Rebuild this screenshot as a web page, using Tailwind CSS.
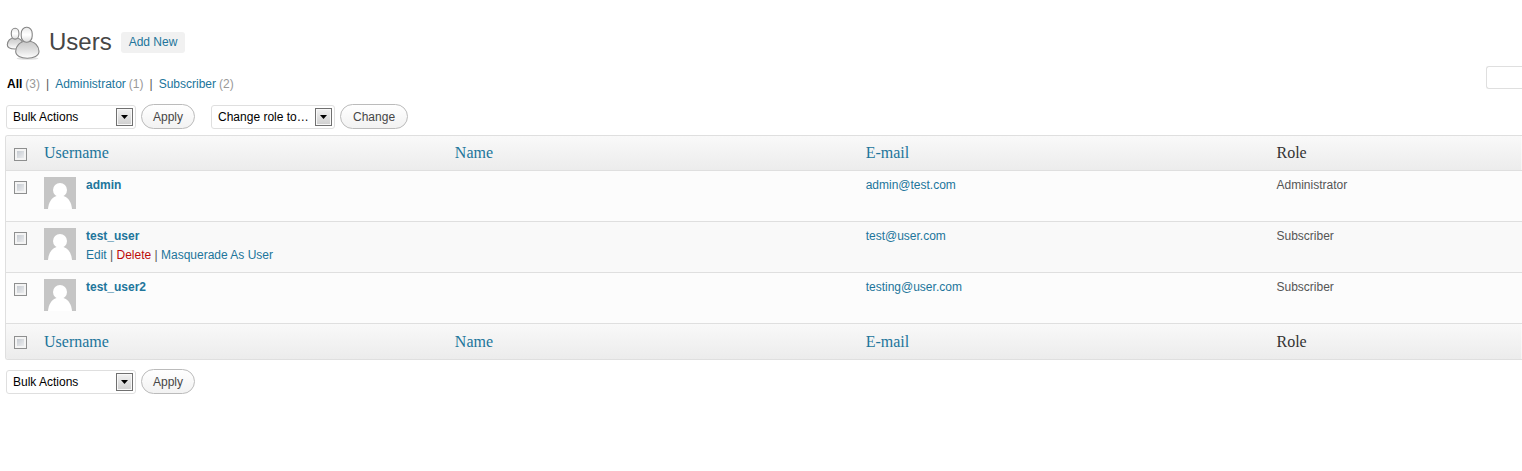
<!DOCTYPE html>
<html lang="en">
<head>
  <meta charset="utf-8">
  <meta name="viewport" content="width=device-width, initial-scale=1">
  <title>Users</title>
  <script src="https://cdn.jsdelivr.net/npm/@tailwindcss/browser@4"></script>
</head>
<body class="bg-white font-['Liberation_Sans',Arial,sans-serif] text-[12px] leading-[18px] text-[#555]">

<svg class="hidden">
  <symbol id="avatar" viewBox="0 0 32 32">
    <rect width="32" height="32" fill="#c5c5c5"/>
    <circle cx="16" cy="13" r="7" fill="#fff"/>
    <path d="M4 32C4.500 25.500 7.500 20.500 12.500 19H19.500C24.500 20.500 27.500 25.500 28 32Z" fill="#fff"/>
  </symbol>
</svg>

<main class="pl-[5px] pt-[25px]">
  <header class="flex items-center h-[34px]">
    <svg class="w-[36px] h-[36px] shrink-0" viewBox="0 0 36 36" fill="none">
      <defs>
        <linearGradient id="head" x1="0" y1="0" x2="0" y2="1">
          <stop offset="0" stop-color="#e8e8e8"/><stop offset=".5" stop-color="#fff"/><stop offset="1" stop-color="#dcdcdc"/>
        </linearGradient>
        <linearGradient id="torso" x1="0" y1="0" x2="0" y2="1">
          <stop offset="0" stop-color="#c6c6c6"/><stop offset=".5" stop-color="#dedede"/><stop offset="1" stop-color="#fff"/>
        </linearGradient>
      </defs>
      <ellipse cx="22.500" cy="34.500" rx="11" ry="1.300" fill="#e0e0e0"/>
      <g stroke="#858585" stroke-width="1.100">
        <path d="M10 13.500C5 13.500 2.300 17.500 2.300 20.800C2.300 23.800 6 25 10 25S18 23.800 18 20.800C18 17.500 15 13.500 10 13.500Z" fill="url(#torso)"/>
        <rect x="6.300" y="4.300" width="7.600" height="10.800" rx="3.700" ry="4.800" fill="url(#head)"/>
        <path d="M22.300 17C14.500 17 10.700 22.500 10.700 27.300C10.700 32 16 34.300 22.300 34.300S34 32 34 27.300C34 22.500 30 17 22.300 17Z" fill="url(#torso)"/>
        <rect x="16.200" y="3.300" width="11" height="15" rx="5.200" ry="6.300" fill="url(#head)"/>
      </g>
    </svg>
    <h1 class="ml-[8px] text-[24px] leading-[30px] text-[#464646]">Users</h1>
    <a href="#" class="ml-[9px] px-2 py-[2px] leading-[17px] rounded-[3px] bg-[#f1f1f1] text-[#21759b]">Add New</a>
  </header>

  <div class="flex items-start justify-between mt-[7px] h-[38px]">
    <ul class="flex pl-[2px] mt-[9px] gap-[6px]">
      <li class="flex gap-[3px]"><a href="#" class="font-bold text-black">All</a><span class="text-[#999]">(3)</span></li>
      <li>|</li>
      <li class="flex gap-[3px]"><a href="#" class="text-[#21759b]">Administrator</a><span class="text-[#999]">(1)</span></li>
      <li>|</li>
      <li class="flex gap-[3px]"><a href="#" class="text-[#21759b]">Subscriber</a><span class="text-[#999]">(2)</span></li>
    </ul>
    <input type="search" aria-label="Search Users" class="w-9 h-[23px] px-2 appearance-none border border-r-0 border-[#dfdfdf] rounded-l-[3px] bg-white">
  </div>

  <form class="flex items-center pl-px h-[25px]">
    <div class="relative">
      <select aria-label="Bulk Actions" class="block appearance-none w-[130px] h-6 pl-[6px] border border-[#dfdfdf] rounded-[3px] bg-white text-black">
        <option>Bulk Actions</option>
        <option>Delete</option>
      </select>
      <span class="absolute right-[3px] top-[3px] flex items-center justify-center w-[17px] h-[18px] border border-[#707070] bg-linear-to-b from-[#f2f2f2] to-[#cfcfcf] shadow-[inset_0_0_0_1px_#f8f8f8] pointer-events-none">
        <svg class="w-[7px] h-[4px]" viewBox="0 0 7 4"><path d="M0 0H7L3.500 4Z" fill="#000"/></svg>
      </span>
    </div>
    <button type="button" class="ml-[5px] px-[11px] h-[25px] border border-[#bbb] rounded-full bg-linear-to-b from-white to-[#f2f2f2] text-[#464646]">Apply</button>
    <div class="relative ml-4">
      <select aria-label="Change role to" class="block appearance-none w-[124px] h-6 pl-[6px] border border-[#dfdfdf] rounded-[3px] bg-white text-black">
        <option>Change role to…</option>
        <option>Subscriber</option>
        <option>Administrator</option>
      </select>
      <span class="absolute right-[3px] top-[3px] flex items-center justify-center w-[17px] h-[18px] border border-[#707070] bg-linear-to-b from-[#f2f2f2] to-[#cfcfcf] shadow-[inset_0_0_0_1px_#f8f8f8] pointer-events-none">
        <svg class="w-[7px] h-[4px]" viewBox="0 0 7 4"><path d="M0 0H7L3.500 4Z" fill="#000"/></svg>
      </span>
    </div>
    <button type="button" class="ml-[5px] px-3 h-[25px] border border-[#bbb] rounded-full bg-linear-to-b from-white to-[#f2f2f2] text-[#464646]">Change</button>
  </form>

  <div class="mt-[6px] border border-r-0 border-[#dfdfdf] rounded-l-[3px] overflow-hidden">
    <table class="w-full table-fixed text-left">
      <thead class="bg-linear-to-b from-[#f9f9f9] to-[#ececec] font-[Georgia,'Liberation_Serif',serif] text-[16px] text-[#333]">
        <tr class="h-[34px] border-b border-[#dfdfdf]">
          <th class="w-[38px] pl-2 pt-[3px]"><input type="checkbox" aria-label="Select all" class="block appearance-none size-[13px] border border-[#8e8f8f] bg-linear-to-br from-[#bcc2ca] to-[#f6f6f6] shadow-[inset_0_0_0_2px_#f4f4f4]"></th>
          <th class="w-[27.1%] pt-px font-normal"><a href="#" class="text-[#21759b]">Username</a></th>
          <th class="w-[27.1%] pt-px font-normal"><a href="#" class="text-[#21759b]">Name</a></th>
          <th class="w-[27.1%] pt-px font-normal"><a href="#" class="text-[#21759b]">E-mail</a></th>
          <th class="pt-px font-normal">Role</th>
        </tr>
      </thead>
      <tbody class="align-top">
        <tr class="h-[51px] border-b border-[#dfdfdf] bg-[#fcfcfc]">
          <td class="pl-2 pt-[10px]"><input type="checkbox" aria-label="Select admin" class="block appearance-none size-[13px] border border-[#8e8f8f] bg-linear-to-br from-[#bcc2ca] to-[#f6f6f6] shadow-[inset_0_0_0_2px_#f4f4f4]"></td>
          <td class="pt-[5px]">
            <div class="flex gap-[10px]">
              <svg class="size-8 mt-px"><use href="#avatar"/></svg>
              <a href="#" class="font-bold text-[#21759b]">admin</a>
            </div>
          </td>
          <td></td>
          <td class="pt-[5px]"><a href="#" class="text-[#21759b]">admin@test.com</a></td>
          <td class="pt-[5px]">Administrator</td>
        </tr>
        <tr class="h-[51px] border-b border-[#dfdfdf] bg-[#f9f9f9]">
          <td class="pl-2 pt-[10px]"><input type="checkbox" aria-label="Select test_user" class="block appearance-none size-[13px] border border-[#8e8f8f] bg-linear-to-br from-[#bcc2ca] to-[#f6f6f6] shadow-[inset_0_0_0_2px_#f4f4f4]"></td>
          <td class="pt-[5px]">
            <div class="flex gap-[10px]">
              <svg class="size-8 mt-px"><use href="#avatar"/></svg>
              <div>
                <a href="#" class="font-bold text-[#21759b]">test_user</a>
                <div class="mt-px"><a href="#" class="text-[#21759b]">Edit</a> | <a href="#" class="text-[#bc0b0b]">Delete</a> | <a href="#" class="text-[#21759b]">Masquerade As User</a></div>
              </div>
            </div>
          </td>
          <td></td>
          <td class="pt-[5px]"><a href="#" class="text-[#21759b]">test@user.com</a></td>
          <td class="pt-[5px]">Subscriber</td>
        </tr>
        <tr class="h-[51px] border-b border-[#dfdfdf] bg-[#fcfcfc]">
          <td class="pl-2 pt-[10px]"><input type="checkbox" aria-label="Select test_user2" class="block appearance-none size-[13px] border border-[#8e8f8f] bg-linear-to-br from-[#bcc2ca] to-[#f6f6f6] shadow-[inset_0_0_0_2px_#f4f4f4]"></td>
          <td class="pt-[5px]">
            <div class="flex gap-[10px]">
              <svg class="size-8 mt-px"><use href="#avatar"/></svg>
              <a href="#" class="font-bold text-[#21759b]">test_user2</a>
            </div>
          </td>
          <td></td>
          <td class="pt-[5px]"><a href="#" class="text-[#21759b]">testing@user.com</a></td>
          <td class="pt-[5px]">Subscriber</td>
        </tr>
      </tbody>
      <tfoot class="bg-linear-to-b from-[#f9f9f9] to-[#ececec] font-[Georgia,'Liberation_Serif',serif] text-[16px] text-[#333]">
        <tr class="h-[36px]">
          <th class="pl-2 pt-[3px]"><input type="checkbox" aria-label="Select all" class="block appearance-none size-[13px] border border-[#8e8f8f] bg-linear-to-br from-[#bcc2ca] to-[#f6f6f6] shadow-[inset_0_0_0_2px_#f4f4f4]"></th>
          <th class="pt-px font-normal"><a href="#" class="text-[#21759b]">Username</a></th>
          <th class="pt-px font-normal"><a href="#" class="text-[#21759b]">Name</a></th>
          <th class="pt-px font-normal"><a href="#" class="text-[#21759b]">E-mail</a></th>
          <th class="pt-px font-normal">Role</th>
        </tr>
      </tfoot>
    </table>
  </div>

  <form class="flex items-center mt-[9px] pl-px h-[25px]">
    <div class="relative">
      <select aria-label="Bulk Actions" class="block appearance-none w-[130px] h-6 pl-[6px] border border-[#dfdfdf] rounded-[3px] bg-white text-black">
        <option>Bulk Actions</option>
        <option>Delete</option>
      </select>
      <span class="absolute right-[3px] top-[3px] flex items-center justify-center w-[17px] h-[18px] border border-[#707070] bg-linear-to-b from-[#f2f2f2] to-[#cfcfcf] shadow-[inset_0_0_0_1px_#f8f8f8] pointer-events-none">
        <svg class="w-[7px] h-[4px]" viewBox="0 0 7 4"><path d="M0 0H7L3.500 4Z" fill="#000"/></svg>
      </span>
    </div>
    <button type="button" class="ml-[5px] px-[11px] h-[25px] border border-[#bbb] rounded-full bg-linear-to-b from-white to-[#f2f2f2] text-[#464646]">Apply</button>
  </form>
</main>

</body>
</html>
